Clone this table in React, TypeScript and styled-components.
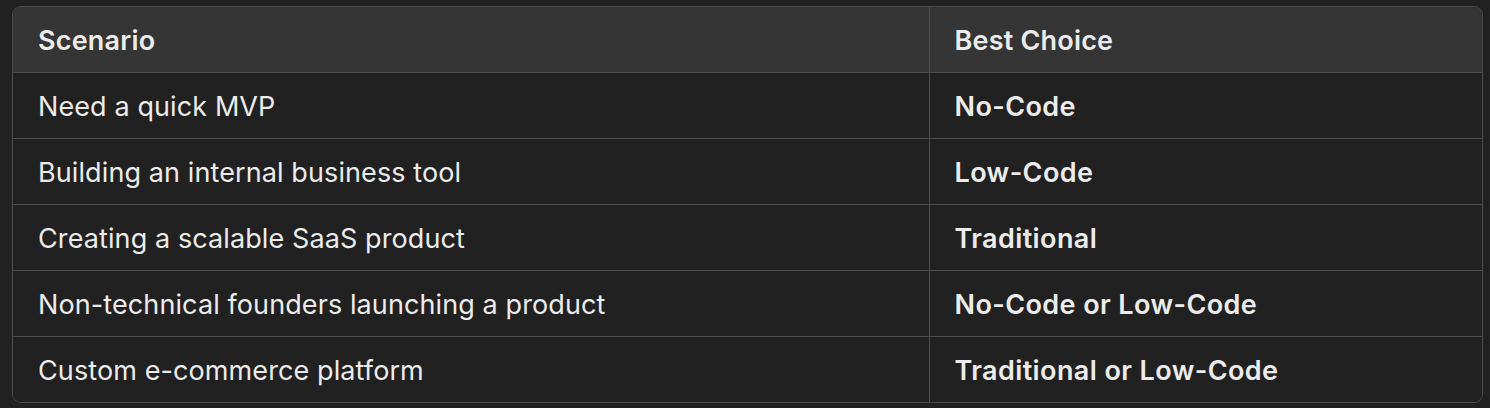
import React from 'react';
import styled, { createGlobalStyle } from 'styled-components';

interface Row {
  scenario: string;
  choice: string;
}

const rows: Row[] = [
  { scenario: 'Need a quick MVP', choice: 'No-Code' },
  { scenario: 'Building an internal business tool', choice: 'Low-Code' },
  { scenario: 'Creating a scalable SaaS product', choice: 'Traditional' },
  { scenario: 'Non-technical founders launching a product', choice: 'No-Code or Low-Code' },
  { scenario: 'Custom e-commerce platform', choice: 'Traditional or Low-Code' },
];

const App: React.FC = () => {
  return (
    <Page>
      <GlobalStyle />
      <TableFrame>
        <Table>
          <colgroup>
            <col style={{ width: 916 }} />
            <col />
          </colgroup>
          <thead>
            <tr>
              <HeadCell>Scenario</HeadCell>
              <HeadCell>Best Choice</HeadCell>
            </tr>
          </thead>
          <tbody>
            {rows.map(row => (
              <tr key={row.scenario}>
                <Cell>{row.scenario}</Cell>
                <Cell $strong>{row.choice}</Cell>
              </tr>
            ))}
          </tbody>
        </Table>
      </TableFrame>
    </Page>
  );
};

const GlobalStyle = createGlobalStyle`
  html, body {
    margin: 0;
    padding: 0;
    background: #212121;
  }
`;

const Page = styled.div`
  padding: 6px 7px 0 12px;
  font-family: Inter, "Noto Sans", sans-serif;
  color: #ececec;
`;

const TableFrame = styled.div`
  border: 1.5px solid #4d4d4d;
  border-radius: 9px;
  overflow: hidden;
`;

const Table = styled.table`
  width: 100%;
  border-collapse: collapse;
  table-layout: fixed;
`;

const HeadCell = styled.th`
  height: 63px;
  padding: 2px 25px 0;
  text-align: left;
  font-size: 27px;
  font-weight: 600;
  letter-spacing: 0.2px;
  background: #353535;
  border-bottom: 1.5px solid #4d4d4d;
  & + & {
    border-left: 1.5px solid #4d4d4d;
  }
`;

const Cell = styled.td<{ $strong?: boolean }>`
  height: 63px;
  padding: 2px 25px 0;
  font-size: 27px;
  font-weight: ${p => (p.$strong ? 600 : 400)};
  letter-spacing: ${p => (p.$strong ? '0.4px' : '0.1px')};
  background: #212121;
  tr + tr & {
    border-top: 1.5px solid #4d4d4d;
  }
  & + & {
    border-left: 1.5px solid #4d4d4d;
  }
`;

export default App;
